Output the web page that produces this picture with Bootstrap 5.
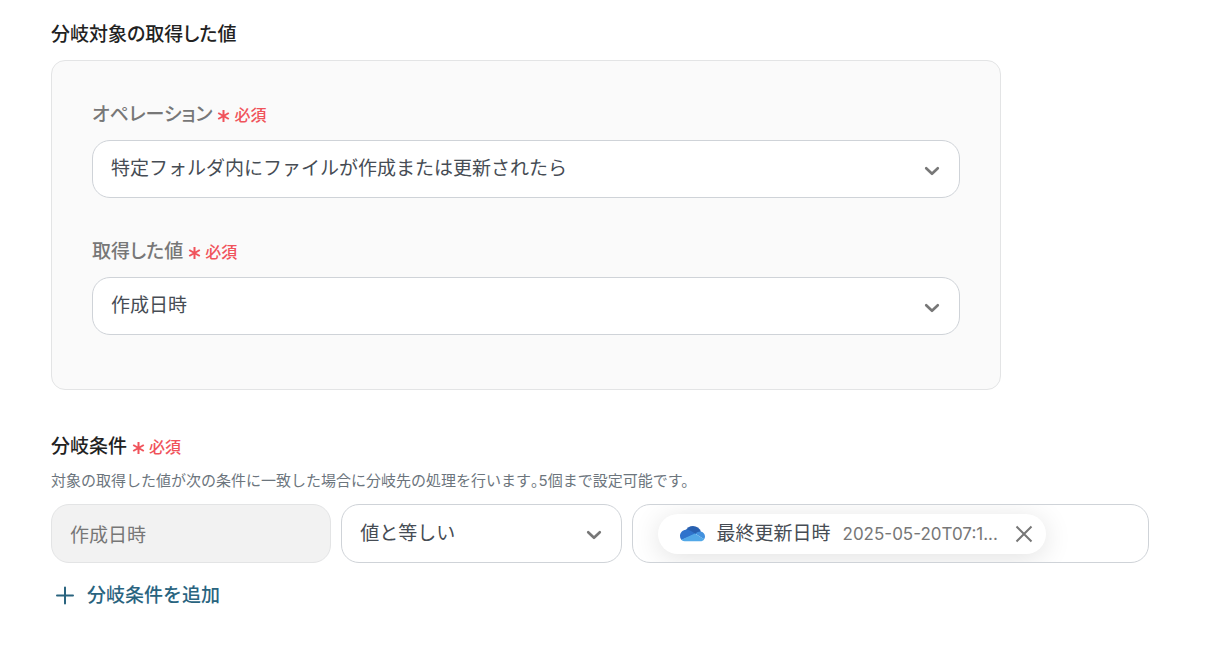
<!DOCTYPE html>
<html lang="ja">
<head>
<meta charset="utf-8">
<meta name="viewport" content="width=device-width, initial-scale=1">
<title>分岐条件の設定</title>
<link href="https://cdn.jsdelivr.net/npm/bootstrap@5.3.0/dist/css/bootstrap.min.css" rel="stylesheet">
<style>
  body { font-family: "Inter", "Noto Sans CJK JP", sans-serif; font-size: 19px; line-height: 28px; color: #464c54; background: #fff; }
  .page-body { padding: 21px 83px 20px 51px; }
  .section-title { font-size: 19px; line-height: 28px; font-weight: 500; color: #222; font-feature-settings: "palt"; }
  .field-label { font-size: 19px; line-height: 28px; font-weight: 500; color: #777; font-feature-settings: "palt"; }
  .required-mark { margin-left: 1px; font-size: 16px; font-weight: 500; color: #f0535b; gap: 4px; }
  .value-panel { max-width: 950px; margin-top: 11px; padding: 40px 40px 54px; background: #fafafa; border: 1px solid #e3e4e5; border-radius: 14px; }
  .label-space { margin-bottom: 11px; }
  .condition-title { margin-top: 43px; }
  .field-box { height: 58px; padding: 0 18px; font-size: 19px; line-height: 28px; color: #464c54; background-color: #fff; border: 1px solid #cfd3d8; border-radius: 18px; }
  .field-box:disabled { color: #777; background: #f2f2f2; border-color: #e3e4e5; opacity: 1; }
  select.field-box { appearance: none; padding-right: 48px; }
  .select-arrow { position: absolute; right: 20px; top: 24px; pointer-events: none; }
  .help-text { margin-bottom: 12px; padding-top: 1px; font-size: 15px; line-height: 22px; color: #6c757d; }
  .half-stop { font-feature-settings: "halt"; }
  .condition-row { display: grid; grid-template-columns: 280fr 280fr 517fr; gap: 10px; }
  .condition-row .field-box { height: 59px; }
  .token-field { padding-left: 25px; overflow: hidden; }
  .token { height: 40px; padding: 0 12px 0 20px; border-radius: 20px; background: #fff; box-shadow: 0 4px 28px rgba(0,0,0,.12); }
  .token-name { margin-left: 10px; }
  .token-value { width: 158px; margin-left: 12px; font-size: 17px; color: #777; }
  .token-remove { margin-left: 13px; }
  .token-input { min-width: 0; outline: 0; }
  .btn.add-link { gap: 12px; margin-top: 19px; padding: 0 4px; font-size: 19px; line-height: 28px; font-weight: 500; color: #2a647f; }
</style>
</head>
<body>
<main class="page-body">
  <h2 class="section-title mb-0">分岐対象の取得した値</h2>
  <section class="value-panel d-flex flex-column">
    <label for="operation" class="field-label label-space d-flex align-items-center gap-1">オペレーション
      <span class="required-mark d-inline-flex align-items-center"><svg width="13" height="14" viewBox="0 0 13 14" fill="none" stroke="currentColor" stroke-width="2" aria-hidden="true"><path d="M6.5 2v12M1.2 5l10.6 6M11.8 5L1.2 11"/></svg>必須</span>
    </label>
    <div class="position-relative">
      <select id="operation" class="field-box w-100 d-block"><option>特定フォルダ内にファイルが作成または更新されたら</option></select>
      <svg class="select-arrow" width="16" height="14" viewBox="0 0 16 14" fill="none" stroke="#777" stroke-width="2.6" stroke-linecap="round" stroke-linejoin="round" aria-hidden="true"><path d="M2.2 4.2L8 9.8l5.8-5.6"/></svg>
    </div>
    <label for="value" class="field-label label-space d-flex align-items-center gap-1 mt-4 pt-3">取得した値
      <span class="required-mark d-inline-flex align-items-center"><svg width="13" height="14" viewBox="0 0 13 14" fill="none" stroke="currentColor" stroke-width="2" aria-hidden="true"><path d="M6.5 2v12M1.2 5l10.6 6M11.8 5L1.2 11"/></svg>必須</span>
    </label>
    <div class="position-relative">
      <select id="value" class="field-box w-100 d-block"><option>作成日時</option></select>
      <svg class="select-arrow" width="16" height="14" viewBox="0 0 16 14" fill="none" stroke="#777" stroke-width="2.6" stroke-linecap="round" stroke-linejoin="round" aria-hidden="true"><path d="M2.2 4.2L8 9.8l5.8-5.6"/></svg>
    </div>
  </section>

  <h2 class="section-title condition-title d-flex align-items-center gap-1 mb-2">分岐条件
    <span class="required-mark d-inline-flex align-items-center"><svg width="13" height="14" viewBox="0 0 13 14" fill="none" stroke="currentColor" stroke-width="2" aria-hidden="true"><path d="M6.5 2v12M1.2 5l10.6 6M11.8 5L1.2 11"/></svg>必須</span>
  </h2>
  <p class="help-text">対象の取得した値が次の条件に一致した場合に分岐先の処理を行います<span class="half-stop">。</span>5個まで設定可能です。</p>
  <div class="condition-row">
    <input type="text" class="field-box w-100" value="作成日時" aria-label="対象の値" disabled>
    <div class="position-relative">
      <select class="field-box w-100 d-block" aria-label="条件"><option>値と等しい</option></select>
      <svg class="select-arrow" width="16" height="14" viewBox="0 0 16 14" fill="none" stroke="#777" stroke-width="2.6" stroke-linecap="round" stroke-linejoin="round" aria-hidden="true"><path d="M2.2 4.2L8 9.8l5.8-5.6"/></svg>
    </div>
    <div class="field-box token-field d-flex align-items-center">
      <span class="token d-flex align-items-center flex-shrink-0">
        <svg width="29" height="20" viewBox="0 0 29 20" aria-hidden="true">
          <path fill="#2860b0" d="M7.2 7C8.9 3.9 11.7 2 15 2c3.6 0 6.6 2.1 8 5.500L16 11z"/>
          <path fill="#2f73cc" d="M8.500 5.700c1.700 0 3.200.5 4.500 1.400l4.800 3L3.500 16A5.400 5.400 0 0 1 2 12c0-3.600 2.900-6.300 6.500-6.300z"/>
          <path fill="#4391de" d="M17.400 9.800c1.400-1.600 3-2.400 5.100-2.400 2.700.3 4.500 2.600 4.500 5.100 0 1.100-.3 2-.9 2.800z"/>
          <path fill="#52a8e8" d="M3.200 15.700l13.700-6.100 9.300 5.600c-.9 1.300-2.200 2.100-3.900 2.100H8c-2 0-3.700-.6-4.800-1.600z"/>
        </svg>
        <span class="token-name">最終更新日時</span>
        <span class="token-value text-truncate">2025-05-20T07:1...</span>
        <button type="button" class="btn token-remove p-0 border-0 d-flex" aria-label="削除"><svg width="20" height="20" viewBox="0 0 20 20" fill="none" stroke="#777" stroke-width="2" aria-hidden="true"><path d="M2.5 2.5l15 15M17.5 2.5l-15 15"/></svg></button>
      </span>
      <input type="text" class="token-input border-0 bg-transparent p-0 flex-grow-1" aria-label="比較する値">
    </div>
  </div>
  <button type="button" class="btn add-link border-0 d-inline-flex align-items-center">
    <svg width="20" height="20" viewBox="0 0 20 20" fill="none" stroke="currentColor" stroke-width="2" stroke-linecap="round" aria-hidden="true"><path d="M10 1.500v16M2 9.500h16"/></svg>分岐条件を追加
  </button>
</main>
<script src="https://cdn.jsdelivr.net/npm/bootstrap@5.3.0/dist/js/bootstrap.bundle.min.js"></script>
</body>
</html>
